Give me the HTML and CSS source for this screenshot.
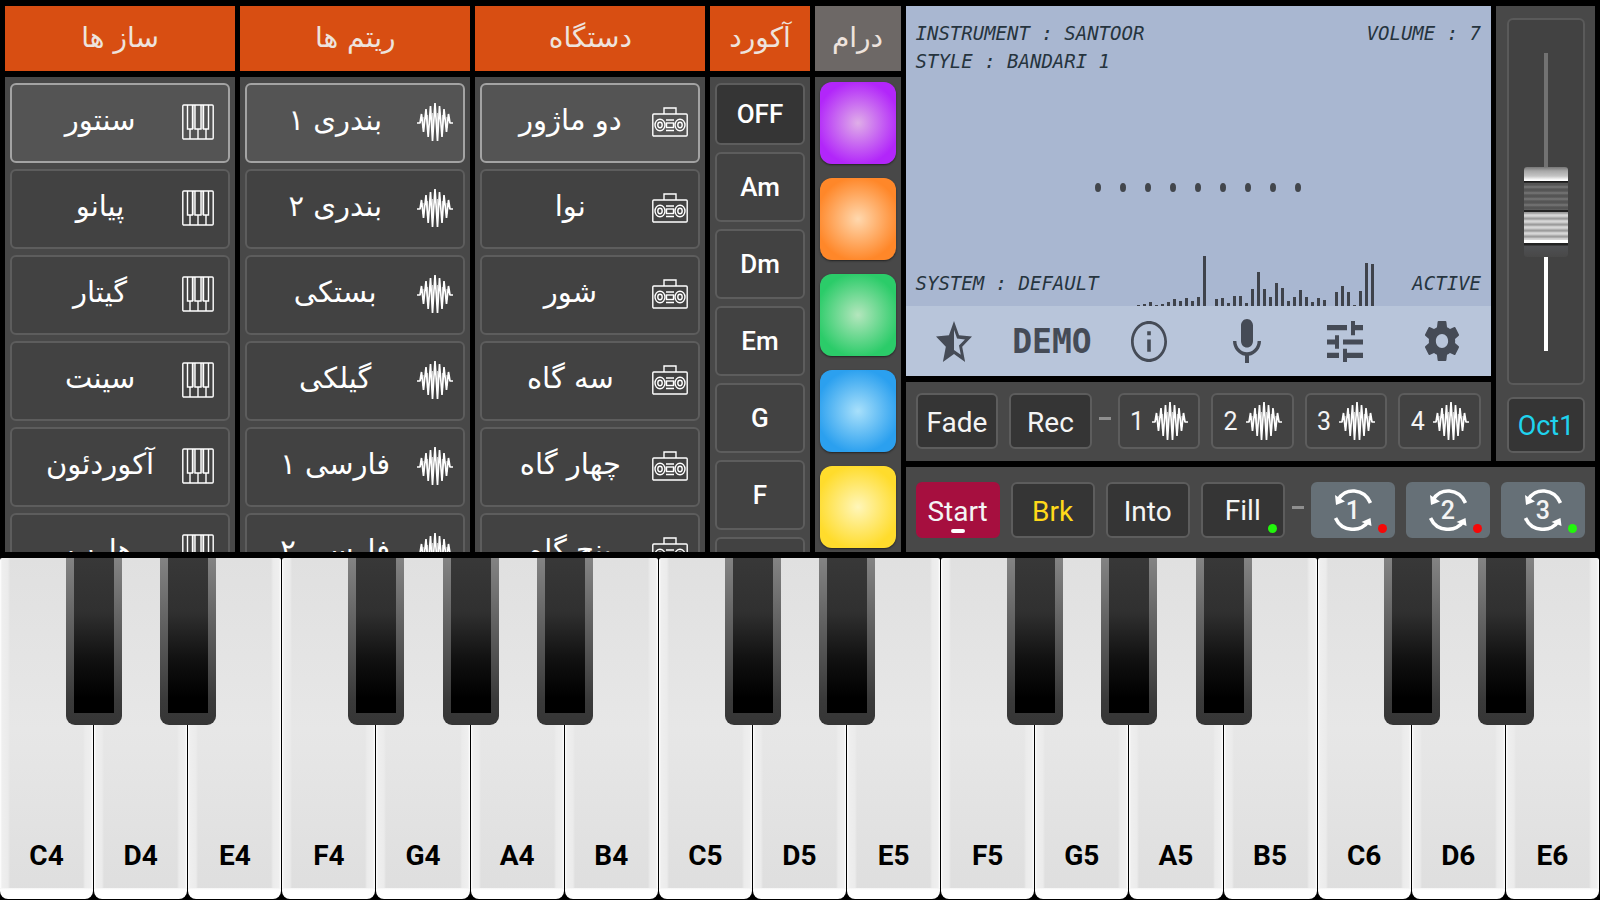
FILE: index.html
```html
<!DOCTYPE html>
<html lang="fa">
<head>
<meta charset="utf-8">
<title>Santoor Keyboard</title>
<link rel="stylesheet" href="styles.css">
</head>
<body>
<svg class="sprite" aria-hidden="true">
  <symbol id="i-piano" viewBox="0 0 32 36" preserveAspectRatio="none">
    <g fill="none" stroke="#fff" stroke-width="1.4">
      <rect x=".8" y="1" width="30.4" height="34" rx="1"/>
      <path d="M5.5 1v24h5V1M13 1v24h6V1M21.5 1v24h5V1M8 25v10M16 25v10M24 25v10"/>
      <path stroke-opacity=".6" d="M11.8 1v24M20.2 1v24"/>
    </g>
  </symbol>
  <symbol id="i-wave" viewBox="0 0 36 38" preserveAspectRatio="none">
    <path fill="none" stroke="#fff" stroke-width="1.7" stroke-linejoin="bevel" d="M0 20h3l1.5-9 2 18L9 6l2.2 28 2.3-31 2 35L18 0l2.5 38 2-35L25 34l2-28 2.5 23 2-18 1.500 9h3"/>
    <path fill="none" stroke="#fff" stroke-width="1.200" stroke-opacity=".7" d="M6 14v11M10.500 12v15M15.500 10v16M20.500 10v16M25.500 12v15M30 14v11"/>
  </symbol>
  <symbol id="i-box" viewBox="0 0 36 30" preserveAspectRatio="none">
    <g fill="none" stroke="#fff" stroke-width="1.4">
      <rect x=".8" y="7" width="34.4" height="22" rx="1"/>
      <path d="M12 7V1h12v6M14 13h8M14 23.500h8"/>
      <rect x="14.500" y="16" width="7" height="4.500"/>
      <ellipse cx="8" cy="18" rx="5" ry="5.800"/><ellipse cx="8" cy="18" rx="2.200" ry="2.700"/>
      <ellipse cx="28" cy="18" rx="5" ry="5.800"/><ellipse cx="28" cy="18" rx="2.200" ry="2.700"/>
    </g>
  </symbol>
  <symbol id="i-loop" viewBox="0 0 38 42" preserveAspectRatio="none">
    <g fill="none" stroke="#fff" stroke-width="3.600">
      <path d="M36.500 14C30 -1 11 -2 4 11M1.500 29C8 44 28 43 34.500 32"/>
    </g>
    <path fill="#fff" d="M1 6l1 10 9-3.500zM37.500 37l-1-8-9 4z"/>
  </symbol>
</svg>

<main class="app">
  <section class="console">
    <section class="column" dir="rtl">
      <h2 class="head">ساز ها</h2>
      <div class="panel list">
        <button class="item on"><svg class="ico piano-ico"><use href="#i-piano"/></svg><span>سنتور</span></button>
        <button class="item"><svg class="ico piano-ico"><use href="#i-piano"/></svg><span>پیانو</span></button>
        <button class="item"><svg class="ico piano-ico"><use href="#i-piano"/></svg><span>گیتار</span></button>
        <button class="item"><svg class="ico piano-ico"><use href="#i-piano"/></svg><span>سینت</span></button>
        <button class="item"><svg class="ico piano-ico"><use href="#i-piano"/></svg><span>آکوردئون</span></button>
        <button class="item"><svg class="ico piano-ico"><use href="#i-piano"/></svg><span>هارپ</span></button>
      </div>
    </section>
    <section class="column" dir="rtl">
      <h2 class="head">ریتم ها</h2>
      <div class="panel list">
        <button class="item on"><svg class="ico wave"><use href="#i-wave"/></svg><span>بندری ۱</span></button>
        <button class="item"><svg class="ico wave"><use href="#i-wave"/></svg><span>بندری ۲</span></button>
        <button class="item"><svg class="ico wave"><use href="#i-wave"/></svg><span>بستکی</span></button>
        <button class="item"><svg class="ico wave"><use href="#i-wave"/></svg><span>گیلکی</span></button>
        <button class="item"><svg class="ico wave"><use href="#i-wave"/></svg><span>فارسی ۱</span></button>
        <button class="item"><svg class="ico wave"><use href="#i-wave"/></svg><span>فارسی ۲</span></button>
      </div>
    </section>
    <section class="column" dir="rtl">
      <h2 class="head">دستگاه</h2>
      <div class="panel list">
        <button class="item on"><svg class="ico box"><use href="#i-box"/></svg><span>دو ماژور</span></button>
        <button class="item"><svg class="ico box"><use href="#i-box"/></svg><span>نوا</span></button>
        <button class="item"><svg class="ico box"><use href="#i-box"/></svg><span>شور</span></button>
        <button class="item"><svg class="ico box"><use href="#i-box"/></svg><span>سه گاه</span></button>
        <button class="item"><svg class="ico box"><use href="#i-box"/></svg><span>چهار گاه</span></button>
        <button class="item"><svg class="ico box"><use href="#i-box"/></svg><span>پنج گاه</span></button>
      </div>
    </section>
    <section class="column">
      <h2 class="head" dir="rtl">آکورد</h2>
      <div class="panel list chords">
        <button class="chord off">OFF</button>
        <button class="chord">Am</button>
        <button class="chord">Dm</button>
        <button class="chord">Em</button>
        <button class="chord">G</button>
        <button class="chord">F</button>
        <button class="chord" aria-label="Next chord"></button>
      </div>
    </section>
    <section class="column">
      <h2 class="head drum" dir="rtl">درام</h2>
      <div class="panel list pads">
        <button class="pad purple" aria-label="Pad 1"></button>
        <button class="pad orange" aria-label="Pad 2"></button>
        <button class="pad green" aria-label="Pad 3"></button>
        <button class="pad blue" aria-label="Pad 4"></button>
        <button class="pad yellow" aria-label="Pad 5"></button>
      </div>
    </section>

    <section class="right">
      <div class="upper">
        <div class="center">
          <div class="lcd">
            <div class="screen">
              <div class="line"><span>INSTRUMENT : SANTOOR</span><span>VOLUME : 7</span></div>
              <div class="line"><span>STYLE : BANDARI 1</span></div>
              <div class="beats"><i></i><i></i><i></i><i></i><i></i><i></i><i></i><i></i><i></i></div>
              <div class="line last">
                <span>SYSTEM : DEFAULT</span>
                <svg class="spectrum" viewBox="0 0 237 50"><path fill="none" stroke="#3f434b" stroke-width="3" d="M1.500 50v-1M7.500 50v-2M13.500 50v-4M19.500 50v-1M25.500 50v-2M31.500 50v-4M37.500 50v-7M43.500 50v-5M49.500 50v-8M55.500 50v-5M61.500 50v-9M67.500 50v-50M79.500 50v-7M85.500 50v-8M91.500 50v-3M97.500 50v-10M103.500 50v-10M109.500 50v-3M115.500 50v-17M121.500 50v-34M127.500 50v-17M133.500 50v-9M139.500 50v-23M145.500 50v-18M151.500 50v-5M157.500 50v-9M163.500 50v-16M169.500 50v-9M175.500 50v-4M181.500 50v-8M187.500 50v-6M199.500 50v-14M205.500 50v-20M211.500 50v-14M217.500 50v-1M223.500 50v-15M229.500 50v-43M235.500 50v-42"/></svg>
                <span>ACTIVE</span>
              </div>
            </div>
            <nav class="tools">
              <button aria-label="Favourites"><svg class="tool" viewBox="2 2 20 19" preserveAspectRatio="none"><path d="M22 9.240l-7.190-.62L12 2 9.190 8.630 2 9.240l5.460 4.730L5.820 21 12 17.270 18.180 21l-1.630-7.030L22 9.240zM12 15.400V6.100l1.710 4.040 4.380.38-3.320 2.880 1 4.280L12 15.400z"/></svg></button>
              <button class="demo">DEMO</button>
              <button aria-label="Info"><svg class="tool" viewBox="2 2 20 20" preserveAspectRatio="none"><path d="M11 7h2v2h-2zm0 4h2v6h-2zm1-9C6.480 2 2 6.480 2 12s4.480 10 10 10 10-4.480 10-10S17.520 2 12 2zm0 18.500c-4.700 0-8.500-3.800-8.500-8.500s3.800-8.500 8.500-8.500 8.500 3.800 8.500 8.500-3.800 8.500-8.500 8.500z"/></svg></button>
              <button aria-label="Microphone"><svg class="tool mic" viewBox="5 2 14 20" preserveAspectRatio="none"><path d="M12 15c1.660 0 3-1.340 3-3V5c0-1.660-1.340-3-3-3S9 3.340 9 5v7c0 1.660 1.340 3 3 3zM17.300 12c0 3-2.540 5.100-5.300 5.100S6.700 15 6.700 12H5c0 3.410 2.720 6.230 6 6.720V22h2v-3.280c3.280-.48 6-3.300 6-6.720h-1.700z"/></svg></button>
              <button aria-label="Mixer"><svg class="tool" viewBox="0 0 36 40" preserveAspectRatio="none"><path d="M0 4h20v5H0zM24 0h4v4h8v5h-8v5h-4zM0 18h8v-4h4v13H8v-4H0zM16 18h20v5H16zM0 31h12v5H0zM16 27h4v4h16v5H20v5h-4z"/></svg></button>
              <button aria-label="Settings"><svg class="tool gear" viewBox="2.300 2 19.400 20" preserveAspectRatio="none"><path d="M19.430 12.980c.04-.32.07-.64.07-.98s-.03-.66-.07-.98l2.110-1.650c.19-.15.24-.42.120-.64l-2-3.460c-.12-.22-.39-.3-.61-.22l-2.490 1c-.52-.4-1.080-.73-1.690-.98l-.38-2.650C14.460 2.180 14.250 2 14 2h-4c-.25 0-.46.18-.49.42l-.38 2.650c-.61.25-1.170.59-1.690.98l-2.490-1c-.23-.09-.49 0-.61.22l-2 3.460c-.13.22-.07.49.12.64l2.110 1.650c-.04.32-.07.65-.07.98s.03.66.07.98l-2.110 1.650c-.19.15-.24.42-.12.64l2 3.460c.12.22.39.3.61.22l2.490-1c.52.4 1.080.73 1.690.98l.38 2.650c.03.24.24.42.49.42h4c.25 0 .46-.18.49-.42l.38-2.650c.61-.25 1.170-.59 1.690-.98l2.490 1c.23.09.49 0 .61-.22l2-3.460c.12-.22.07-.49-.12-.64l-2.110-1.650zM12 15.500c-1.930 0-3.500-1.570-3.500-3.500s1.570-3.500 3.500-3.500 3.500 1.570 3.500 3.500-1.570 3.500-3.500 3.500z"/></svg></button>
            </nav>
          </div>
          <div class="panel row">
            <button class="key dark">Fade</button>
            <button class="key dark">Rec</button>
            <span class="dash"></span>
            <button class="key fill">1<svg class="ico wave"><use href="#i-wave"/></svg></button>
            <button class="key fill">2<svg class="ico wave"><use href="#i-wave"/></svg></button>
            <button class="key fill">3<svg class="ico wave"><use href="#i-wave"/></svg></button>
            <button class="key fill">4<svg class="ico wave"><use href="#i-wave"/></svg></button>
          </div>
        </div>
        <div class="panel side">
          <div class="fader"><input class="slider" type="range" min="0" max="100" value="45" aria-label="Volume"></div>
          <button class="key dark oct">Oct1</button>
        </div>
      </div>
      <div class="panel row transport">
        <button class="key start">Start</button>
        <button class="key dark brk">Brk</button>
        <button class="key dark">Into</button>
        <button class="key dark lamp lit">Fill</button>
        <span class="dash"></span>
        <button class="key loop lamp"><svg class="cycle"><use href="#i-loop"/></svg><span>1</span></button>
        <button class="key loop lamp"><svg class="cycle"><use href="#i-loop"/></svg><span>2</span></button>
        <button class="key loop lamp lit"><svg class="cycle"><use href="#i-loop"/></svg><span>3</span></button>
      </div>
    </section>
  </section>

  <section class="piano">
    <div class="slot"><button class="white">C4</button><button class="black" aria-label="C#4"></button></div>
    <div class="slot"><button class="white">D4</button><button class="black" aria-label="D#4"></button></div>
    <div class="slot"><button class="white">E4</button></div>
    <div class="slot"><button class="white">F4</button><button class="black" aria-label="F#4"></button></div>
    <div class="slot"><button class="white">G4</button><button class="black" aria-label="G#4"></button></div>
    <div class="slot"><button class="white">A4</button><button class="black" aria-label="A#4"></button></div>
    <div class="slot"><button class="white">B4</button></div>
    <div class="slot"><button class="white">C5</button><button class="black" aria-label="C#5"></button></div>
    <div class="slot"><button class="white">D5</button><button class="black" aria-label="D#5"></button></div>
    <div class="slot"><button class="white">E5</button></div>
    <div class="slot"><button class="white">F5</button><button class="black" aria-label="F#5"></button></div>
    <div class="slot"><button class="white">G5</button><button class="black" aria-label="G#5"></button></div>
    <div class="slot"><button class="white">A5</button><button class="black" aria-label="A#5"></button></div>
    <div class="slot"><button class="white">B5</button></div>
    <div class="slot"><button class="white">C6</button><button class="black" aria-label="C#6"></button></div>
    <div class="slot"><button class="white">D6</button><button class="black" aria-label="D#6"></button></div>
    <div class="slot"><button class="white">E6</button></div>
  </section>
</main>
</body>
</html>
```
FILE: styles.css
```css
* { box-sizing: border-box; }

body {
  margin: 0;
  background: #000;
  color: #fff;
  font-family: Roboto, "DejaVu Sans", sans-serif;
}

button {
  margin: 0;
  padding: 0;
  border: 0;
  background: none;
  color: inherit;
  font: inherit;
  cursor: pointer;
}

.sprite { position: absolute; width: 0; height: 0; }

.app {
  display: grid;
  grid-template-rows: minmax(0, 62fr) minmax(0, 38fr);
  height: 100vh;
  overflow: hidden;
}

.console {
  display: grid;
  grid-template-columns: 230fr 230fr 230fr 99fr 86fr 689fr;
  gap: 5px;
  padding: 6px 5px;
  min-height: 0;
}

.column {
  display: grid;
  grid-template-rows: 65px minmax(0, 1fr);
  gap: 6px;
  min-width: 0;
  min-height: 0;
}

.head {
  display: flex;
  align-items: center;
  justify-content: center;
  margin: 0;
  padding-bottom: 3px;
  background: #d84e12;
  color: #eee3dd;
  font: 400 28px "DejaVu Sans", sans-serif;
}

.drum { background: #6d6866; }

.panel { background: #484848; }

.list {
  display: flex;
  flex-direction: column;
  gap: 6px;
  padding: 6px 5px 0;
  overflow: hidden;
}

.item {
  display: flex;
  flex: none;
  align-items: center;
  height: 80px;
  padding: 0 10px 2px 6px;
  border: 2px solid #5d5d5d;
  border-radius: 6px;
  background: #424242;
  font: 400 29px "DejaVu Sans", sans-serif;
}

.item span { flex: 1; padding-bottom: 4px; text-align: center; }
.on { background: #545454; border-color: #a3a3a3; }

.ico { flex: none; width: 36px; height: 38px; }
.piano-ico { width: 32px; height: 36px; margin-right: 4px; }
.box { height: 30px; }

.chords { gap: 7px; padding: 6px 5px 0; }

.chord {
  flex: none;
  height: 70px;
  border: 2px solid #5d5d5d;
  border-radius: 6px;
  background: #424242;
  font-size: 26px;
  font-weight: 500;
}

.off { height: 62px; background: #353535; }

.pads { gap: 14px; padding: 5px 5px 0; }

.pad {
  flex: none;
  height: 82px;
  border-radius: 12px;
  box-shadow: 0 1px 2px #222;
}

.purple { background: radial-gradient(circle, #dfaee8, #b226fa 75%); }
.orange { background: radial-gradient(circle, #ffd8ae, #ff8729 75%); }
.green { background: radial-gradient(circle, #b4e6bd, #2bcc69 75%); }
.blue { background: radial-gradient(circle, #a8e0fb, #2ba0ef 75%); }
.yellow { background: radial-gradient(circle, #fff6b9, #ffdc2c 75%); }

.right {
  display: grid;
  grid-template-rows: minmax(0, 1fr) 85px;
  gap: 6px;
  min-width: 0;
}

.upper {
  display: grid;
  grid-template-columns: minmax(0, 1fr) 99px;
  gap: 5px;
}

.center {
  display: grid;
  grid-template-rows: minmax(0, 1fr) 79px;
  gap: 6px;
}

.lcd {
  display: grid;
  grid-template-rows: minmax(0, 1fr) 70px;
  background: #b8c5da;
}

.screen {
  display: flex;
  flex-direction: column;
  padding: 13px 10px 0;
  background: #a9b7d1;
  color: #26343e;
  font: italic 400 19px/28px "DejaVu Sans Mono", monospace;
}

.line { display: flex; justify-content: space-between; }
.last { align-items: flex-end; margin-top: auto; }
.last span { padding-bottom: 9px; }
.spectrum { width: 237px; height: 50px; }

.beats {
  display: flex;
  justify-content: center;
  gap: 19px;
  margin-top: 108px;
}

.beats i {
  width: 6px;
  height: 9px;
  border-radius: 50%;
  background: #42464c;
}

.tools {
  display: grid;
  grid-template-columns: repeat(6, 1fr);
  color: #454b56;
}

.tools button { display: grid; place-items: center; }
.tool { width: 36px; height: 41px; fill: currentColor; }
.mic { width: 28px; height: 44px; }
.gear { width: 34px; height: 40px; }
.demo { font: 700 33px "DejaVu Sans Mono", monospace; }

.row {
  display: flex;
  align-items: flex-start;
  gap: 11px;
  padding: 11px 10px 0;
}

.transport { padding-top: 15px; }

.key {
  flex: 1;
  height: 56px;
  padding-top: 2px;
  border: 2px solid #5d5d5d;
  border-radius: 6px;
  background: #424242;
  color: #f4f4f4;
  font-size: 28px;
}

.dark { background: #353535; }

.dash {
  align-self: flex-start;
  width: 12px;
  height: 3px;
  margin: 24px -4px 0;
  background: #8f8f8f;
}

.fill {
  display: flex;
  align-items: center;
  justify-content: center;
  gap: 8px;
  padding: 0;
  font-size: 25px;
}

.start {
  position: relative;
  border-color: #a60f3f;
  background: #a60f3f;
}

.start::after {
  content: "";
  position: absolute;
  bottom: 3px;
  left: 50%;
  width: 14px;
  height: 4px;
  margin-left: -7px;
  border-radius: 2px;
  background: #fff;
}

.brk { color: #ffd91a; }
.oct { flex: none; color: #1fd3ee; font-size: 27px; }

.lamp { position: relative; padding: 0; }

.lamp::after {
  content: "";
  position: absolute;
  right: 6px;
  bottom: 3px;
  width: 9px;
  height: 9px;
  border-radius: 50%;
  background: #f60808;
}

.lit::after { background: #22f60c; }

.loop {
  display: grid;
  place-items: center;
  border-color: #667077;
  background: #667077;
  font-size: 25px;
  font-weight: 500;
}

.loop > * { grid-area: 1 / 1; }
.cycle { width: 38px; height: 42px; }

.side {
  display: flex;
  flex-direction: column;
  gap: 12px;
  padding: 12px 10px 8px 11px;
}

.fader {
  display: flex;
  flex: 1;
  align-items: center;
  justify-content: center;
  min-height: 0;
  border: 2px solid #5a5a5a;
  border-radius: 6px;
  background: #424242;
}

.slider {
  appearance: none;
  writing-mode: vertical-lr;
  direction: rtl;
  width: 44px;
  height: 298px;
  margin: 0;
  background: linear-gradient(#727272 0 50%, #fff 50%) center / 4px 100% no-repeat;
}

.slider::-webkit-slider-thumb {
  appearance: none;
  width: 44px;
  height: 90px;
  border-radius: 3px;
  background:
    linear-gradient(#777, #a8a8a8 4px, #c4c4c4 9px, #fff 13px) top / 100% 14px no-repeat,
    linear-gradient(#111, #333) 0 14px / 100% 2px no-repeat,
    repeating-linear-gradient(#555 0 2px, #777 4px, #555 6px) 0 16px / 100% 27px no-repeat,
    linear-gradient(#222, #222) 0 43px / 100% 2px no-repeat,
    repeating-linear-gradient(#9c9c9c 0 1px, #dcdcdc 3px, #c4c4c4 5px, #9c9c9c 6px) 0 45px / 100% 28px no-repeat,
    linear-gradient(#fff, #fff) 0 73px / 100% 3px no-repeat,
    linear-gradient(#222 0 2px, #4f5053 3px, #484848) 0 76px / 100% 14px no-repeat;
}

.piano {
  display: grid;
  grid-template-columns: repeat(17, minmax(0, 1fr));
  min-height: 0;
}

.slot { position: relative; display: flex; }

.white {
  display: flex;
  flex: 1;
  align-items: flex-end;
  justify-content: center;
  margin: 0 1px 1px 0;
  padding-bottom: 27px;
  border-radius: 2px 2px 8px 8px;
  background:
    linear-gradient(#f4f4f4, #fff 2px) bottom / 100% 11px no-repeat,
    linear-gradient(90deg, #fff, #efefef 2px, #ebebeb 8px, transparent 10px, transparent calc(100% - 10px), #ebebeb calc(100% - 8px), #efefef calc(100% - 2px), #fff),
    linear-gradient(#e0e0e0, #e7e7e7 50%, #dedede);
  color: #000;
  font-size: 28px;
  font-weight: 700;
}

.black {
  position: absolute;
  z-index: 1;
  top: 0;
  right: -28px;
  width: 56px;
  height: 167px;
  padding: 0 8px 12px;
  border-radius: 0 0 9px 9px;
  background:
    linear-gradient(#383838, #303030 35%, #111 65%, #000 90%) content-box no-repeat,
    linear-gradient(#838383, #3a3a3a 85%, #353535);
}
```
